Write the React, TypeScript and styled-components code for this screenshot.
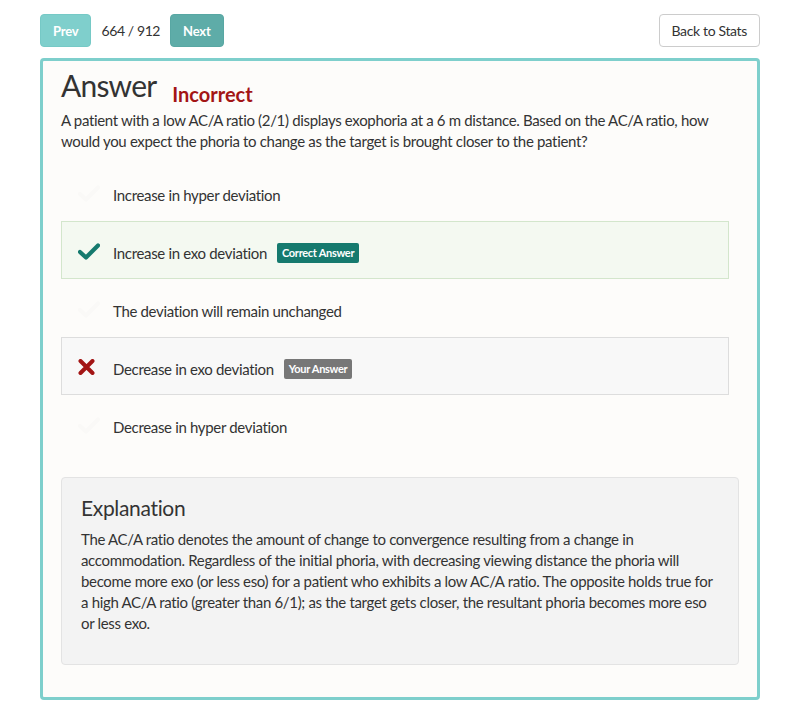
import React from "react";
import styled, { createGlobalStyle } from "styled-components";

const Global = createGlobalStyle`
  html, body { margin: 0; padding: 0; background: #ffffff; }
  body { font-family: Lato, "Open Sans", sans-serif; color: #333333; }
  * { box-sizing: border-box; }
`;

const Page = styled.div`
  padding: 14px 40px 24px 40px;
`;

const TopBar = styled.div`
  display: flex;
  align-items: center;
  height: 33px;
  margin-bottom: 11px;
`;

const NavGroup = styled.div`
  display: flex;
  align-items: center;
  gap: 10px;
  flex: 1;
`;

const NavButton = styled.button<{ $dark?: boolean }>`
  height: 33px;
  padding: 0 12px;
  border: 1px solid ${(p) => (p.$dark ? "#58a7a3" : "#76c9c6")};
  border-radius: 4px;
  background: ${(p) => (p.$dark ? "#5eaca8" : "#7fcfcc")};
  color: #ffffff;
  font-family: Lato, sans-serif;
  font-weight: 700;
  font-size: 13px;
  letter-spacing: -0.2px;
`;

const Counter = styled.span`
  font-size: 14px;
  letter-spacing: -0.4px;
  color: #333;
`;

const BackButton = styled.button`
  height: 33px;
  padding: 0 12px;
  border: 1px solid #cccccc;
  border-radius: 4px;
  background: #ffffff;
  color: #333;
  font-family: Lato, sans-serif;
  font-size: 14px;
  letter-spacing: -0.35px;
`;

const Card = styled.div`
  border: 3px solid #7ecfcc;
  border-radius: 4px;
  background: #fdfcfa;
  padding: 4px 18px 32px 18px;
  letter-spacing: -0.33px;
`;

const TitleRow = styled.div`
  display: flex;
  align-items: baseline;
  gap: 16px;
`;

const Title = styled.h1`
  margin: 0;
  font-size: 30px;
  font-weight: 400;
  line-height: 40px;
  letter-spacing: -0.8px;
  color: #333;
`;

const Verdict = styled.span`
  font-size: 20px;
  font-weight: 700;
  color: #a31515;
  letter-spacing: 0;
  position: relative;
  top: 5px;
`;

const Question = styled.p`
  margin: 5px 0 11px 0;
  font-size: 15px;
  line-height: 21px;
  color: #333;
`;

const Options = styled.div`
  display: flex;
  flex-direction: column;
  margin-right: 10px;
  margin-bottom: 24px;
`;

const Option = styled.div<{ $kind?: "correct" | "wrong" | "plain" }>`
  display: flex;
  align-items: center;
  height: 58px;
  padding: 5px 0 0 16px;
  font-size: 15px;
  color: #333;
  border: 1px solid
    ${(p) =>
      p.$kind === "correct" ? "#d3e6cc" : p.$kind === "wrong" ? "#dddddd" : "transparent"};
  background: ${(p) =>
    p.$kind === "correct" ? "#f4f9f1" : p.$kind === "wrong" ? "#f8f8f8" : "transparent"};
`;

const IconSlot = styled.span`
  width: 35px;
  display: flex;
  align-items: center;
  margin-top: -3px;
`;

const Badge = styled.span<{ $tone: "green" | "grey" }>`
  margin-left: 10px;
  padding: 3px 5px 4px;
  border-radius: 2px;
  font-size: 11px;
  font-weight: 700;
  letter-spacing: -0.3px;
  color: #fff;
  background: ${(p) => (p.$tone === "green" ? "#157a6e" : "#777777")};
`;

const Explanation = styled.div`
  background: #f3f3f3;
  border: 1px solid #e3e3e3;
  border-radius: 4px;
  padding: 16px 19px 30px 19px;
`;

const ExplTitle = styled.h2`
  margin: 0 0 7px 0;
  font-size: 21px;
  font-weight: 400;
  line-height: 28px;
  color: #333;
`;

const ExplText = styled.p`
  margin: 0;
  font-size: 15px;
  line-height: 21px;
  color: #333;
`;

const Check = ({ color }: { color: string }) => (
  <svg width="22" height="17" viewBox="0 0 22 17">
    <path d="M2 9 L8 14.5 L20 2.5" fill="none" stroke={color} strokeWidth="4.2" strokeLinecap="round" strokeLinejoin="round" />
  </svg>
);

const Cross = () => (
  <svg width="17" height="16" viewBox="0 0 17 16">
    <path d="M2.5 2 L14.5 14 M14.5 2 L2.5 14" stroke="#a31515" strokeWidth="4" strokeLinecap="round" />
  </svg>
);

const options: { text: string; kind: "correct" | "wrong" | "plain" }[] = [
  { text: "Increase in hyper deviation", kind: "plain" },
  { text: "Increase in exo deviation", kind: "correct" },
  { text: "The deviation will remain unchanged", kind: "plain" },
  { text: "Decrease in exo deviation", kind: "wrong" },
  { text: "Decrease in hyper deviation", kind: "plain" },
];

export default function App() {
  return (
    <Page>
      <Global />
      <TopBar>
        <NavGroup>
          <NavButton>Prev</NavButton>
          <Counter>664 / 912</Counter>
          <NavButton $dark>Next</NavButton>
        </NavGroup>
        <BackButton>Back to Stats</BackButton>
      </TopBar>
      <Card>
        <TitleRow>
          <Title>Answer</Title>
          <Verdict>Incorrect</Verdict>
        </TitleRow>
        <Question>
          A patient with a low AC/A ratio (2/1) displays exophoria at a 6 m distance. Based on the AC/A ratio, how
          would you expect the phoria to change as the target is brought closer to the patient?
        </Question>
        <Options>
          {options.map((o) => (
            <Option key={o.text} $kind={o.kind}>
              <IconSlot>
                {o.kind === "correct" ? (
                  <Check color="#157a6e" />
                ) : o.kind === "wrong" ? (
                  <Cross />
                ) : (
                  <Check color="#faf9f7" />
                )}
              </IconSlot>
              {o.text}
              {o.kind === "correct" && <Badge $tone="green">Correct Answer</Badge>}
              {o.kind === "wrong" && <Badge $tone="grey">Your Answer</Badge>}
            </Option>
          ))}
        </Options>
        <Explanation>
          <ExplTitle>Explanation</ExplTitle>
          <ExplText>
            The AC/A ratio denotes the amount of change to convergence resulting from a change in accommodation.
            Regardless of the initial phoria, with decreasing viewing distance the phoria will become more exo (or
            less eso) for a patient who exhibits a low AC/A ratio. The opposite holds true for a high AC/A ratio
            (greater than 6/1); as the target gets closer, the resultant phoria becomes more eso or less exo.
          </ExplText>
        </Explanation>
      </Card>
    </Page>
  );
}
